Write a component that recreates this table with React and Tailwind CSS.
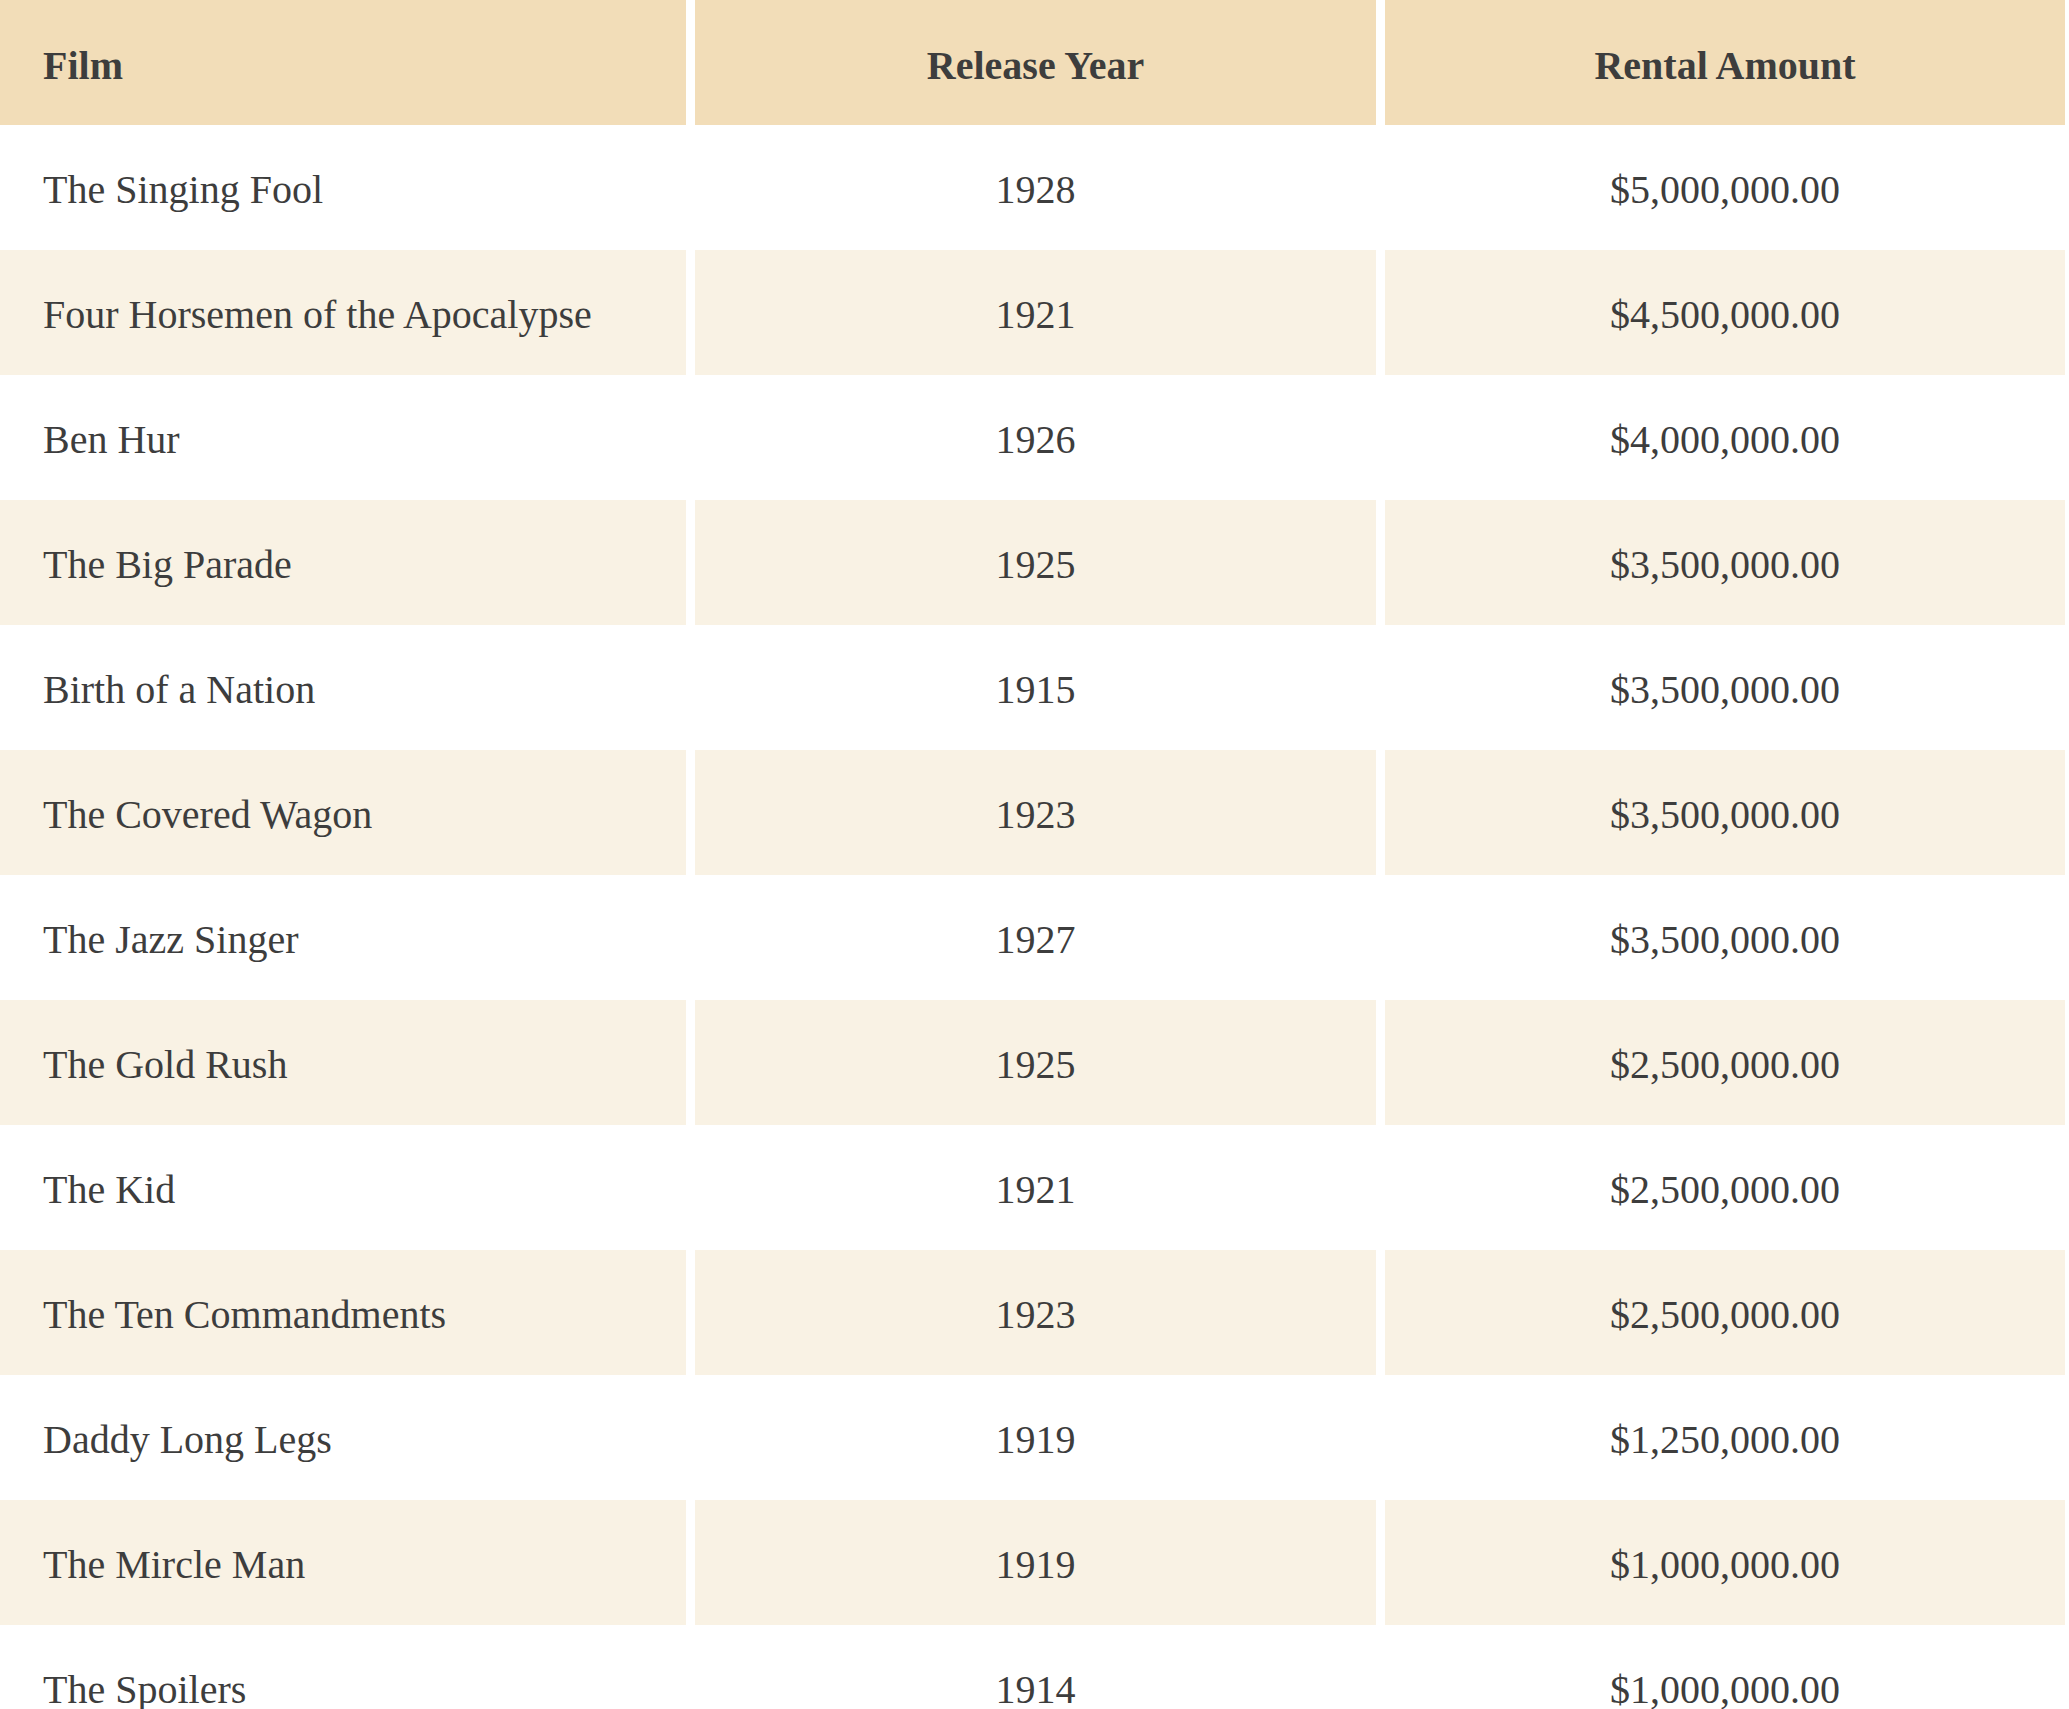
const films = [
  ["The Singing Fool", "1928", "$5,000,000.00"],
  ["Four Horsemen of the Apocalypse", "1921", "$4,500,000.00"],
  ["Ben Hur", "1926", "$4,000,000.00"],
  ["The Big Parade", "1925", "$3,500,000.00"],
  ["Birth of a Nation", "1915", "$3,500,000.00"],
  ["The Covered Wagon", "1923", "$3,500,000.00"],
  ["The Jazz Singer", "1927", "$3,500,000.00"],
  ["The Gold Rush", "1925", "$2,500,000.00"],
  ["The Kid", "1921", "$2,500,000.00"],
  ["The Ten Commandments", "1923", "$2,500,000.00"],
  ["Daddy Long Legs", "1919", "$1,250,000.00"],
  ["The Mircle Man", "1919", "$1,000,000.00"],
  ["The Spoilers", "1914", "$1,000,000.00"],
];

const App = () => {
  return (
    <div className="bg-white w-[2069px] h-[1709px] overflow-hidden font-['Liberation_Serif',serif] text-[40px] text-[#3d3d3d]">
      <div className="grid grid-cols-[686px_681px_680px] gap-x-[9px] w-[2064px]">
        <div className="h-[125px] flex items-center pl-[43px] pt-[6px] bg-[#f2ddb8] font-bold">Film</div>
        <div className="h-[125px] flex items-center justify-center pt-[6px] bg-[#f2ddb8] font-bold">Release Year</div>
        <div className="h-[125px] flex items-center justify-center pt-[6px] bg-[#f2ddb8] font-bold">Rental Amount</div>

        {films.map(([film, year, amount], i) => {
          const bg = i % 2 === 1 ? "bg-[#f9f2e4]" : "bg-white";
          return [
            <div key={`f${i}`} className={`h-[125px] flex items-center pl-[43px] pt-[4px] ${bg}`}>{film}</div>,
            <div key={`y${i}`} className={`h-[125px] flex items-center justify-center pt-[4px] ${bg}`}>{year}</div>,
            <div key={`a${i}`} className={`h-[125px] flex items-center justify-center pt-[4px] ${bg}`}>{amount}</div>,
          ];
        })}
      </div>
    </div>
  );
};

export default App;
